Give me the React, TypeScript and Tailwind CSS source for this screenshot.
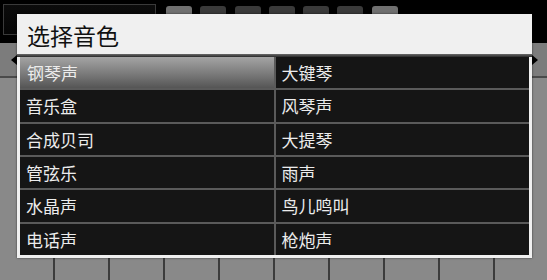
const voices: string[] = [
  '钢琴声',
  '大键琴',
  '音乐盒',
  '风琴声',
  '合成贝司',
  '大提琴',
  '管弦乐',
  '雨声',
  '水晶声',
  '鸟儿鸣叫',
  '电话声',
  '枪炮声',
];

const topButtons = [true, false, false, false, false, false, true];

export default function App() {
  const selected = 0;

  return (
    <div
      className="relative w-[547px] h-[280px] overflow-hidden bg-black flex flex-col"
      style={{ fontFamily: '"Noto Sans CJK SC", "Noto Sans", sans-serif' }}>
      {/* Top bar */}
      <div className="h-[43px] flex items-start shrink-0">
        <div className="ml-[3px] mt-[4px] w-[153px] h-[31px] border border-[#3a3a3a] bg-[linear-gradient(to_bottom,#0c0c0c,#050505)]" />
        <div className="ml-[10px] mt-[6px] flex gap-[8.3px]">
          {topButtons.map((light, i) => (
            <div
              key={i}
              className={
                light
                  ? 'w-[26px] h-[20px] rounded-t-[3px] bg-[#707070]'
                  : 'w-[26px] h-[20px] rounded-t-[3px] bg-[#3a3a3a]'
              }
            />
          ))}
        </div>
      </div>

      {/* Nav strip */}
      <div className="h-[35px] shrink-0 flex items-center justify-between bg-[#7c7c7c] border-b-2 border-[#4a4a4a]">
        <div className="ml-[11px] w-0 h-0 border-y-[5px] border-y-transparent border-r-[6px] border-r-black" />
        <div className="mr-[9px] w-0 h-0 border-y-[5px] border-y-transparent border-l-[6px] border-l-black" />
      </div>

      {/* Keys */}
      <div className="flex-1 flex bg-[#898989]">
        {Array.from({ length: 10 }).map((_, i) => (
          <div key={i} className="w-[55px] shrink-0 border-r-[2px] border-[#3c3c3c]" />
        ))}
      </div>

      {/* Dialog */}
      <div className="absolute left-[17px] top-[14px] w-[515px] h-[244px] flex flex-col bg-[#f0f0f0] px-[3px] pb-[3px] shadow-[0_0_2px_rgba(0,0,0,0.6)]">
        <div className="h-[40px] shrink-0 flex items-center pl-[7px] pt-[3px] text-[23px] text-[#111] leading-none">
          选择音色
        </div>
        <div className="h-[3px] -mx-[3px] shrink-0 bg-[linear-gradient(to_bottom,#6a6a6a,#2a2a2a)]" />
        <div className="flex-1 grid grid-cols-2 grid-rows-6 gap-[2px] bg-[#5a5a5a]">
          {voices.map((v, i) => (
            <div
              key={v}
              className={
                i === selected
                  ? 'flex items-center pl-[7px] text-[17px] text-[#ececec] bg-[linear-gradient(to_bottom,#a4a4a4,#7a7a7a_55%,#555555)]'
                  : 'flex items-center pl-[6px] text-[17px] text-[#ececec] bg-[#151515]'
              }>
              {v}
            </div>
          ))}
        </div>
      </div>
    </div>
  );
}
